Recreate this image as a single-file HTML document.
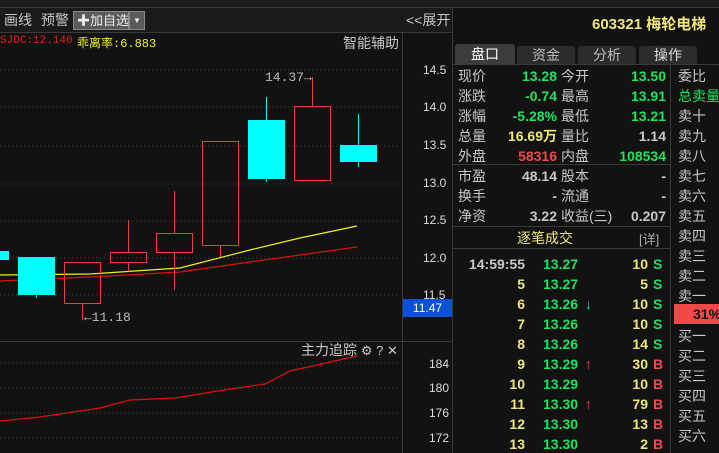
<!DOCTYPE html><html><head><meta charset="utf-8"><style>
*{margin:0;padding:0}
html,body{width:719px;height:453px;overflow:hidden}
body{background:#121212;position:relative;font-family:"Liberation Sans","Noto Sans CJK SC",sans-serif;color:#c8c8c8}
.a{position:absolute;white-space:nowrap}
.cn{font-size:14px;color:#c8c8c8}
.n{font-weight:bold;font-size:14px}
.g{color:#1de45c}.y{color:#f0e67a}.r{color:#f24848}.w{color:#c8c8c8}
.rt{text-align:right}
</style></head><body>
<div class="a" style="left:0;top:0;width:719px;height:7px;background:#1c1c1c;border-bottom:1px solid #3a3a3a"></div>
<div class="a" style="left:0;top:8px;width:452px;height:24px;background:#1a1a1a;border-bottom:1px solid #3a3a3a"></div>
<div class="a cn" style="left:4px;top:10px">画线</div>
<div class="a cn" style="left:41px;top:10px">预警</div>
<div class="a" style="left:73px;top:11px;width:56px;height:19px;background:#5a5a5a;border:1px solid #888;color:#eee;font-size:13px;line-height:17px;padding-left:3px;box-sizing:border-box">✚加自选</div>
<div class="a" style="left:129px;top:11px;width:16px;height:19px;background:#5a5a5a;border:1px solid #888;box-sizing:border-box;color:#eee;font-size:8px;line-height:17px;text-align:center">▼</div>
<div class="a cn" style="left:406px;top:10px">&lt;&lt;展开</div>
<div class="a" style="left:0;top:35px;font-family:'Liberation Mono',monospace;font-size:11px;color:#e02020">SJDC:12.140</div>
<div class="a" style="left:77px;top:34px;font-size:12px;color:#f0f020;font-family:'Liberation Mono','Noto Sans CJK SC',monospace">乖离率:6.883</div>
<div class="a cn" style="left:343px;top:33px">智能辅助</div>
<div class="a" style="left:402px;top:33px;width:1px;height:420px;background:#3a3a3a"></div>
<div class="a" style="left:452px;top:8px;width:1px;height:445px;background:#3a3a3a"></div>
<svg class="a" style="left:0;top:0" width="452" height="453">
<g stroke="#444" stroke-dasharray="1,3"><line x1="0" x2="400" y1="70" y2="70"/><line x1="0" x2="400" y1="107" y2="107"/><line x1="0" x2="400" y1="146" y2="146"/><line x1="0" x2="400" y1="184" y2="184"/><line x1="0" x2="400" y1="221" y2="221"/><line x1="0" x2="400" y1="258" y2="258"/><line x1="0" x2="400" y1="295" y2="295"/>
<line x1="0" x2="400" y1="363" y2="363"/><line x1="0" x2="400" y1="388" y2="388"/><line x1="0" x2="400" y1="413" y2="413"/><line x1="0" x2="400" y1="438" y2="438"/></g>
<line x1="0" x2="452" y1="341.5" y2="341.5" stroke="#3a3a3a"/>
<polyline points="0,275 90,274 180,268 250,250 300,238 357,226" fill="none" stroke="#f0f020" stroke-width="1.2"/>
<polyline points="0,281 90,277 180,272 250,262 300,255 357,247" fill="none" stroke="#e01010" stroke-width="1.2"/>
<polyline points="0,421 40,417 100,408 130,400 175,398 230,389 265,384 290,371 357,356" fill="none" stroke="#e01010" stroke-width="1.2"/>
<g fill="#00ffff" stroke="#00ffff"><rect x="0" y="251" width="9" height="9" stroke="none"/><rect x="18" y="257" width="37" height="38" stroke="none"/><line x1="36.5" x2="36.5" y1="295" y2="298"/>
<rect x="248" y="120" width="37" height="59" stroke="none"/><line x1="266.5" x2="266.5" y1="97" y2="182"/>
<rect x="340" y="145" width="37" height="17" stroke="none"/><line x1="358.5" x2="358.5" y1="114" y2="167"/></g>
<g fill="none" stroke="#f23c3c"><rect x="64.5" y="262.5" width="36" height="41"/><line x1="82.5" x2="82.5" y1="304" y2="320"/>
<rect x="110.5" y="252.5" width="36" height="10"/><line x1="128.5" x2="128.5" y1="220" y2="252"/><line x1="128.5" x2="128.5" y1="263" y2="271"/>
<rect x="156.5" y="233.5" width="36" height="19"/><line x1="174.5" x2="174.5" y1="191" y2="233"/><line x1="174.5" x2="174.5" y1="253" y2="290"/>
<rect x="202.5" y="141.5" width="36" height="104"/><line x1="220.5" x2="220.5" y1="246" y2="257"/>
<rect x="294.5" y="106.5" width="36" height="74"/><line x1="312.5" x2="312.5" y1="77" y2="106"/></g>
</svg>
<div class="a" style="left:265px;top:70px;font-family:'Liberation Mono',monospace;font-size:13px;color:#bbb">14.37→</div>
<div class="a" style="left:84px;top:310px;font-family:'Liberation Mono',monospace;font-size:13px;color:#bbb">←11.18</div>
<div class="a" style="left:423px;top:63px;font-size:12px;color:#ddd">14.5</div>
<div class="a" style="left:423px;top:100px;font-size:12px;color:#ddd">14.0</div>
<div class="a" style="left:423px;top:138px;font-size:12px;color:#ddd">13.5</div>
<div class="a" style="left:423px;top:176px;font-size:12px;color:#ddd">13.0</div>
<div class="a" style="left:423px;top:213px;font-size:12px;color:#ddd">12.5</div>
<div class="a" style="left:423px;top:251px;font-size:12px;color:#ddd">12.0</div>
<div class="a" style="left:423px;top:288px;font-size:12px;color:#ddd">11.5</div>
<div class="a" style="left:403px;top:299px;width:49px;height:18px;background:#0a50d8;color:#fff;font-size:12px;line-height:18px;text-align:center">11.47</div>
<div class="a cn" style="left:301px;top:340px">主力追踪 <span style="font-size:13px">⚙ ? ✕</span></div>
<div class="a" style="left:429px;top:357px;font-size:12px;color:#ddd">184</div>
<div class="a" style="left:429px;top:381px;font-size:12px;color:#ddd">180</div>
<div class="a" style="left:429px;top:406px;font-size:12px;color:#ddd">176</div>
<div class="a" style="left:429px;top:431px;font-size:12px;color:#ddd">172</div>

<div class="a" style="left:592px;top:13px;font-size:15px;font-weight:bold;color:#f0e67a">603321 梅轮电梯</div>
<div class="a" style="left:455px;top:44px;width:60px;height:20px;background:#3c3c3c;border-radius:3px 3px 0 0;color:#fff;font-size:14px;text-align:center;line-height:20px">盘口</div>
<div class="a" style="left:517px;top:46px;width:58px;height:18px;background:#2c2c2c;border-radius:3px 3px 0 0;color:#bbb;font-size:14px;text-align:center;line-height:18px">资金</div>
<div class="a" style="left:578px;top:46px;width:58px;height:18px;background:#2c2c2c;border-radius:3px 3px 0 0;color:#bbb;font-size:14px;text-align:center;line-height:18px">分析</div>
<div class="a" style="left:639px;top:46px;width:58px;height:18px;background:#2c2c2c;border-radius:3px 3px 0 0;color:#ddd;font-size:14px;text-align:center;line-height:18px">操作</div>
<div class="a" style="left:453px;top:64px;width:266px;height:1px;background:#3a3a3a"></div>
<div class="a" style="left:670px;top:64px;width:1px;height:389px;background:#3a3a3a"></div>
<div class="a" style="left:453px;top:164px;width:217px;height:1px;background:#3a3a3a"></div>
<div class="a" style="left:453px;top:226px;width:217px;height:1px;background:#3a3a3a"></div>
<div class="a" style="left:453px;top:248px;width:217px;height:1px;background:#3a3a3a"></div>

<div class="a cn" style="left:458px;top:66px;line-height:20px">现价<br>涨跌<br>涨幅<br>总量<br>外盘</div>
<div class="a cn" style="left:458px;top:166px;line-height:20px">市盈<br>换手<br>净资</div>
<div class="a cn" style="left:561px;top:66px;line-height:20px">今开<br>最高<br>最低<br>量比<br>内盘</div>
<div class="a cn" style="left:561px;top:166px;line-height:20px">股本<br>流通<br>收益(三)</div>
<div class="a n rt" style="left:470px;width:87px;top:66px;line-height:20px"><span class="g">13.28</span><br><span class="g">-0.74</span><br><span class="g">-5.28%</span><br><span class="y">16.69万</span><br><span class="r">58316</span></div>
<div class="a n rt" style="left:470px;width:87px;top:166px;line-height:20px;color:#c8c8c8">48.14<br>-<br>3.22</div>
<div class="a n rt" style="left:580px;width:86px;top:66px;line-height:20px"><span class="g">13.50</span><br><span class="g">13.91</span><br><span class="g">13.21</span><br><span class="w">1.14</span><br><span class="g">108534</span></div>
<div class="a n rt" style="left:580px;width:86px;top:166px;line-height:20px;color:#c8c8c8">-<br>-<br>0.207</div>

<div class="a" style="left:517px;top:228px;font-size:14px;color:#f0e67a">逐笔成交</div>
<div class="a" style="left:639px;top:229px;font-size:13px;color:#aaa">[详]</div>
<div class="a n rt" style="left:450px;width:75px;top:254px;line-height:20px"><span class="w">14:59:55</span><br><span class="y">5<br>6<br>7<br>8<br>9<br>10<br>11<br>12<br>13</span></div>
<div class="a n g" style="left:543px;top:254px;line-height:20px">13.27<br>13.27<br>13.26<br>13.26<br>13.26<br>13.29<br>13.29<br>13.30<br>13.30<br>13.30</div>
<div class="a n" style="left:585px;top:254px;line-height:20px"><br><br><span class="g">↓</span><br><br><br><span class="r">↑</span><br><br><span class="r">↑</span></div>
<div class="a n rt y" style="left:610px;width:38px;top:254px;line-height:20px">10<br>5<br>10<br>10<br>14<br>30<br>10<br>79<br>13<br>2</div>
<div class="a n" style="left:653px;top:254px;line-height:20px"><span class="g">S<br>S<br>S<br>S<br>S</span><br><span class="r">B<br>B<br>B<br>B<br>B</span></div>

<div class="a cn" style="left:678px;top:66px;line-height:20px">委比<br><span class="g">总卖量</span><br>卖十<br>卖九<br>卖八<br>卖七<br>卖六<br>卖五<br>卖四<br>卖三<br>卖二<br>卖一</div>
<div class="a" style="left:674px;top:304px;width:45px;height:20px;background:#f24848;color:#111;font-weight:bold;font-size:14px;line-height:20px;padding-left:19px;box-sizing:border-box">31%</div>
<div class="a cn" style="left:678px;top:326px;line-height:20px">买一<br>买二<br>买三<br>买四<br>买五<br>买六</div>
</body></html>
